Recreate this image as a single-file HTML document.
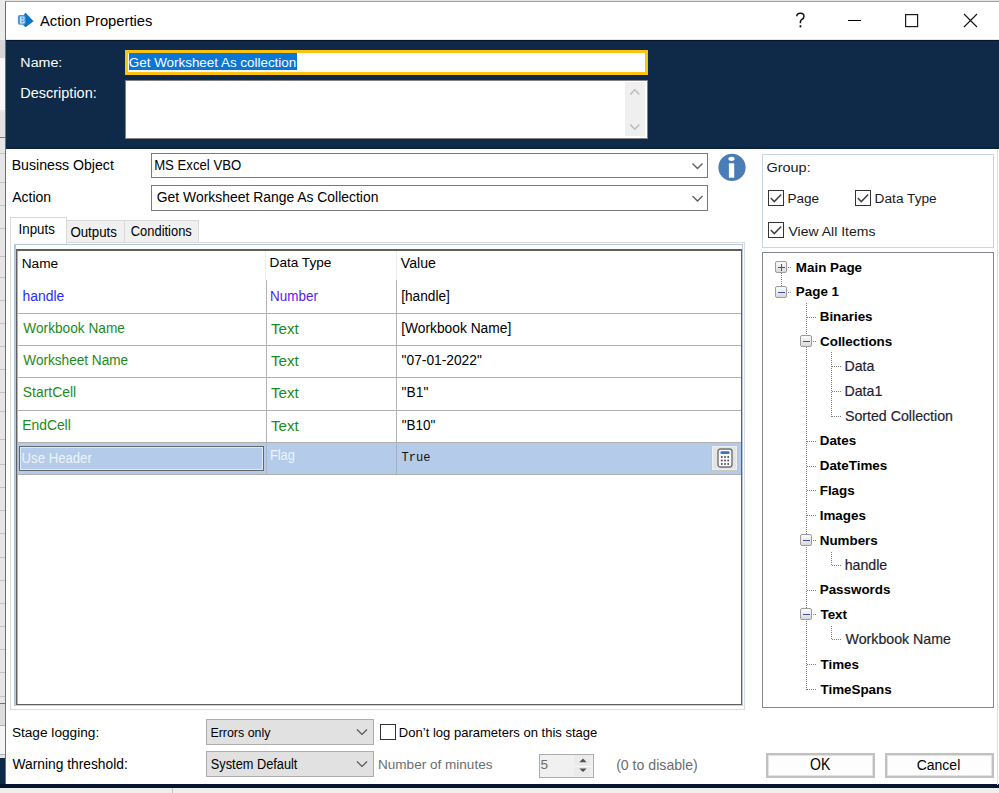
<!DOCTYPE html>
<html><head><meta charset="utf-8">
<style>
*{margin:0;padding:0;box-sizing:border-box}
html,body{width:999px;height:793px;overflow:hidden;background:#f0f0f0}
body{position:relative;font-family:"Liberation Sans",sans-serif;font-size:14px;color:#000}
.a{position:absolute}
.t{position:absolute;white-space:nowrap;line-height:1}
svg{position:absolute;overflow:visible}
</style></head><body>
<div class="a" style="left:0px;top:0px;width:5px;height:793px;background:#e6e6e6"></div>
<div class="a" style="left:0px;top:0px;width:5px;height:40px;background:#ebebeb"></div>
<div class="a" style="left:0px;top:40px;width:5px;height:18px;background:#d6d6d6"></div>
<div class="a" style="left:0px;top:58px;width:5px;height:52px;background:#f7f7f7"></div>
<div class="a" style="left:0px;top:112px;width:5px;height:24px;background:#e2e2e2"></div>
<div class="a" style="left:0px;top:137px;width:5px;height:1px;background:#777"></div>
<div class="a" style="left:0px;top:153px;width:5px;height:1px;background:#c4c4c4"></div>
<div class="a" style="left:0px;top:182px;width:5px;height:1px;background:#c4c4c4"></div>
<div class="a" style="left:0px;top:205px;width:5px;height:1px;background:#c4c4c4"></div>
<div class="a" style="left:0px;top:228px;width:5px;height:1px;background:#c4c4c4"></div>
<div class="a" style="left:0px;top:256px;width:5px;height:1px;background:#c4c4c4"></div>
<div class="a" style="left:0px;top:277px;width:5px;height:1px;background:#c4c4c4"></div>
<div class="a" style="left:0px;top:300px;width:5px;height:1px;background:#c4c4c4"></div>
<div class="a" style="left:0px;top:323px;width:5px;height:1px;background:#c4c4c4"></div>
<div class="a" style="left:0px;top:346px;width:5px;height:1px;background:#c4c4c4"></div>
<div class="a" style="left:0px;top:369px;width:5px;height:1px;background:#c4c4c4"></div>
<div class="a" style="left:0px;top:392px;width:5px;height:1px;background:#c4c4c4"></div>
<div class="a" style="left:0px;top:411px;width:5px;height:1px;background:#c4c4c4"></div>
<div class="a" style="left:0px;top:439px;width:5px;height:1px;background:#c4c4c4"></div>
<div class="a" style="left:0px;top:464px;width:5px;height:1px;background:#c4c4c4"></div>
<div class="a" style="left:0px;top:487px;width:5px;height:1px;background:#c4c4c4"></div>
<div class="a" style="left:0px;top:510px;width:5px;height:1px;background:#c4c4c4"></div>
<div class="a" style="left:0px;top:533px;width:5px;height:1px;background:#c4c4c4"></div>
<div class="a" style="left:0px;top:557px;width:5px;height:1px;background:#c4c4c4"></div>
<div class="a" style="left:0px;top:580px;width:5px;height:1px;background:#c4c4c4"></div>
<div class="a" style="left:0px;top:603px;width:5px;height:1px;background:#c4c4c4"></div>
<div class="a" style="left:0px;top:626px;width:5px;height:1px;background:#c4c4c4"></div>
<div class="a" style="left:0px;top:649px;width:5px;height:1px;background:#c4c4c4"></div>
<div class="a" style="left:0px;top:672px;width:5px;height:1px;background:#c4c4c4"></div>
<div class="a" style="left:0px;top:696px;width:5px;height:1px;background:#c4c4c4"></div>
<div class="a" style="left:0px;top:703px;width:5px;height:1px;background:#707070"></div>
<div class="a" style="left:0px;top:704px;width:5px;height:21px;background:#dedede"></div>
<div class="a" style="left:0px;top:725px;width:5px;height:1px;background:#b0b0b0"></div>
<div class="a" style="left:0px;top:726px;width:5px;height:28px;background:#f4f4f4"></div>
<div class="a" style="left:0px;top:754px;width:5px;height:1px;background:#b0b0b0"></div>
<div class="a" style="left:0px;top:758px;width:5px;height:27px;background:#0e2a48"></div>
<div class="a" style="left:0px;top:784px;width:999px;height:4px;background:#04152d"></div>
<div class="a" style="left:0px;top:788px;width:999px;height:5px;background:#eeeeee"></div>
<div class="a" style="left:172px;top:788px;width:1px;height:5px;background:#c4c4c4"></div>
<div class="a" style="left:5px;top:1px;width:994px;height:783px;background:#fff;border-left:1px solid #707070;border-top:1px solid #a0a0a0"></div>
<div class="a" style="left:5px;top:0px;width:994px;height:1px;background:#e4e4e4"></div>
<svg style="left:0;top:0" width="40" height="40">
<path d="M25.5 12.8 L33.6 21.2 L25.5 27.2 L19 21 Z" fill="#0f70bb"/>
<rect x="17.9" y="14.9" width="7.8" height="9.8" rx="1.8" fill="#4c99d7"/>
<path d="M20 16.4 h3.3 a1.8 1.8 0 0 1 0 3.5 a1.8 1.8 0 0 1 0 3.5 h-3.3 Z M21.4 17.6 v1.6 h1.4 a0.8 0.8 0 0 0 0 -1.6 Z M21.4 20.6 v1.6 h1.5 a0.8 0.8 0 0 0 0 -1.6 Z" fill="#cfe3f3" fill-rule="evenodd"/>
</svg>
<div class="t" style="left:40.00px;top:13.79px;font-size:14.78px;color:#000;">Action Properties</div>
<svg style="left:0;top:0" width="999" height="40">
<path d="M848 20.5 H861" stroke="#000" stroke-width="1"/>
<rect x="905.6" y="14.6" width="12" height="12" fill="none" stroke="#1a1a1a" stroke-width="1.2"/>
<path d="M964 14 L977 27 M977 14 L964 27" stroke="#111" stroke-width="1.1"/>
</svg>
<svg style="left:0;top:0" width="999" height="40">
<path d="M796.8 16.2 Q796.8 13.2 800.4 13.2 Q804 13.2 804 16.3 Q804 18.4 801.6 19.6 Q800.4 20.3 800.4 22 V23.2" fill="none" stroke="#111" stroke-width="1.5"/>
<rect x="799.6" y="25.2" width="1.7" height="2.2" fill="#111"/>
</svg>
<div class="a" style="left:6px;top:40px;width:993px;height:109px;background:#0e2a48"></div>
<div class="a" style="left:6px;top:40px;width:993px;height:1px;background:#04142b"></div>
<div class="a" style="left:6px;top:147px;width:993px;height:2px;background:#0b2440"></div>
<div class="a" style="left:6px;top:39px;width:993px;height:1px;background:#e6e6e6"></div>
<div class="t" style="left:20.36px;top:54.95px;font-size:14.23px;color:#fff;;transform:scale(1,0.95);transform-origin:1.14px 12.05px">Name:</div>
<div class="t" style="left:20.34px;top:85.74px;font-size:14.48px;color:#fff;;transform:scale(1,0.95);transform-origin:1.16px 12.26px">Description:</div>
<div class="a" style="left:125px;top:50px;width:523px;height:25px;background:#fff;border:3px solid #ffc20e"></div>
<div class="a" style="left:128.6px;top:53.3px;width:168px;height:17px;background:#0a76d6"></div>
<div class="t" style="left:128.83px;top:55.64px;font-size:13.41px;color:#fff;">Get Worksheet As collection</div>
<div class="a" style="left:125px;top:80px;width:523px;height:59px;background:#fff;border:1px solid #828282"></div>
<div class="a" style="left:625px;top:82px;width:20px;height:54px;background:#efefef"></div>
<svg style="left:0;top:0" width="999" height="150">
<path d="M630.3 94.5 L634.8 89.8 L639.3 94.5" fill="none" stroke="#bdbdbd" stroke-width="1.6"/>
<path d="M630.3 124.5 L634.8 129.2 L639.3 124.5" fill="none" stroke="#bdbdbd" stroke-width="1.6"/>
</svg>
<div class="t" style="left:11.67px;top:157.73px;font-size:14.15px;color:#000;">Business Object</div>
<div class="t" style="left:12.20px;top:189.95px;font-size:14.00px;color:#000;">Action</div>
<div class="a" style="left:151px;top:153px;width:557px;height:25px;background:#fff;border:1px solid #7a7a7a"></div>
<div class="a" style="left:151px;top:185px;width:557px;height:26px;background:#fff;border:1px solid #7a7a7a"></div>
<div class="t" style="left:154.15px;top:159.04px;font-size:13.18px;color:#000;transform:scaleY(1.1);transform-origin:0 11.15px">MS Excel VBO</div>
<div class="t" style="left:156.80px;top:191.03px;font-size:13.91px;color:#000;">Get Worksheet Range As Collection</div>
<svg style="left:0;top:0" width="999" height="220">
<path d="M692.5 163.5 L697.5 168.5 L702.5 163.5" fill="none" stroke="#606060" stroke-width="1.4"/>
<path d="M692.5 196 L697.5 201 L702.5 196" fill="none" stroke="#606060" stroke-width="1.4"/>
<circle cx="732" cy="167.4" r="13.6" fill="#4a7db7"/>
<ellipse cx="731.5" cy="158.8" rx="3.1" ry="2.1" fill="#fff"/>
<rect x="728.9" y="163.3" width="5.3" height="14.4" fill="#fff"/>
</svg>
<div class="a" style="left:762px;top:154px;width:232px;height:94px;border:1px solid #c7d5e5"></div>
<div class="t" style="left:766.38px;top:160.03px;font-size:14.50px;color:#1a1a1a;;transform:scale(1,0.92);transform-origin:0.72px 12.27px">Group:</div>
<div class="a" style="left:768px;top:190px;width:16px;height:16px;border:1px solid #333;background:#fff"></div>
<svg style="left:768px;top:190px" width="16" height="16"><path d="M2.8 8 L6.3 11.6 L13.2 4.4" fill="none" stroke="#404040" stroke-width="1.45"/></svg>
<div class="a" style="left:855px;top:190px;width:16px;height:16px;border:1px solid #333;background:#fff"></div>
<svg style="left:855px;top:190px" width="16" height="16"><path d="M2.8 8 L6.3 11.6 L13.2 4.4" fill="none" stroke="#404040" stroke-width="1.45"/></svg>
<div class="a" style="left:768px;top:222px;width:16px;height:16px;border:1px solid #333;background:#fff"></div>
<svg style="left:768px;top:222px" width="16" height="16"><path d="M2.8 8 L6.3 11.6 L13.2 4.4" fill="none" stroke="#404040" stroke-width="1.45"/></svg>
<div class="t" style="left:787.42px;top:191.82px;font-size:13.56px;color:#1a1a1a;">Page</div>
<div class="t" style="left:874.60px;top:191.71px;font-size:13.70px;color:#1a1a1a;">Data Type</div>
<div class="t" style="left:788.46px;top:223.63px;font-size:14.02px;color:#1a1a1a;;transform:scale(1,0.94);transform-origin:0.04px 11.87px">View All Items</div>
<div class="a" style="left:762px;top:252px;width:232px;height:456px;border:1px solid #828790;background:#fff"></div>
<div class="a" style="left:781px;top:267px;width:1px;height:25px;background:repeating-linear-gradient(180deg,#7c7c7c 0 1px,transparent 1px 2px)"></div>
<div class="a" style="left:806px;top:303px;width:1px;height:387px;background:repeating-linear-gradient(180deg,#7c7c7c 0 1px,transparent 1px 2px)"></div>
<div class="a" style="left:831px;top:352px;width:1px;height:65px;background:repeating-linear-gradient(180deg,#7c7c7c 0 1px,transparent 1px 2px)"></div>
<div class="a" style="left:831px;top:552px;width:1px;height:14px;background:repeating-linear-gradient(180deg,#7c7c7c 0 1px,transparent 1px 2px)"></div>
<div class="a" style="left:831px;top:626px;width:1px;height:14px;background:repeating-linear-gradient(180deg,#7c7c7c 0 1px,transparent 1px 2px)"></div>
<div class="a" style="left:782px;top:267px;width:10px;height:1px;background:repeating-linear-gradient(90deg,#7c7c7c 0 1px,transparent 1px 2px)"></div>
<div class="t" style="left:795.83px;top:260.66px;font-size:13.40px;font-weight:bold;color:#000;">Main Page</div>
<div class="a" style="left:782px;top:292px;width:10px;height:1px;background:repeating-linear-gradient(90deg,#7c7c7c 0 1px,transparent 1px 2px)"></div>
<div class="t" style="left:795.83px;top:285.48px;font-size:13.40px;font-weight:bold;color:#000;">Page 1</div>
<div class="a" style="left:807px;top:317px;width:10px;height:1px;background:repeating-linear-gradient(90deg,#7c7c7c 0 1px,transparent 1px 2px)"></div>
<div class="t" style="left:819.73px;top:310.30px;font-size:13.40px;font-weight:bold;color:#000;">Binaries</div>
<div class="a" style="left:807px;top:341px;width:10px;height:1px;background:repeating-linear-gradient(90deg,#7c7c7c 0 1px,transparent 1px 2px)"></div>
<div class="t" style="left:820.06px;top:335.12px;font-size:13.40px;font-weight:bold;color:#000;">Collections</div>
<div class="a" style="left:832px;top:366px;width:10px;height:1px;background:repeating-linear-gradient(90deg,#7c7c7c 0 1px,transparent 1px 2px)"></div>
<div class="t" style="left:844.46px;top:359.26px;font-size:14.20px;color:#1e1e30;-webkit-text-stroke:0.18px #1e1e30">Data</div>
<div class="a" style="left:832px;top:391px;width:10px;height:1px;background:repeating-linear-gradient(90deg,#7c7c7c 0 1px,transparent 1px 2px)"></div>
<div class="t" style="left:844.46px;top:384.08px;font-size:14.20px;color:#1e1e30;-webkit-text-stroke:0.18px #1e1e30">Data1</div>
<div class="a" style="left:832px;top:416px;width:10px;height:1px;background:repeating-linear-gradient(90deg,#7c7c7c 0 1px,transparent 1px 2px)"></div>
<div class="t" style="left:844.96px;top:408.90px;font-size:14.20px;color:#1e1e30;-webkit-text-stroke:0.18px #1e1e30">Sorted Collection</div>
<div class="a" style="left:807px;top:441px;width:10px;height:1px;background:repeating-linear-gradient(90deg,#7c7c7c 0 1px,transparent 1px 2px)"></div>
<div class="t" style="left:819.73px;top:434.40px;font-size:13.40px;font-weight:bold;color:#000;">Dates</div>
<div class="a" style="left:807px;top:466px;width:10px;height:1px;background:repeating-linear-gradient(90deg,#7c7c7c 0 1px,transparent 1px 2px)"></div>
<div class="t" style="left:819.73px;top:459.22px;font-size:13.40px;font-weight:bold;color:#000;">DateTimes</div>
<div class="a" style="left:807px;top:490px;width:10px;height:1px;background:repeating-linear-gradient(90deg,#7c7c7c 0 1px,transparent 1px 2px)"></div>
<div class="t" style="left:819.73px;top:484.04px;font-size:13.40px;font-weight:bold;color:#000;">Flags</div>
<div class="a" style="left:807px;top:515px;width:10px;height:1px;background:repeating-linear-gradient(90deg,#7c7c7c 0 1px,transparent 1px 2px)"></div>
<div class="t" style="left:819.73px;top:508.86px;font-size:13.40px;font-weight:bold;color:#000;">Images</div>
<div class="a" style="left:807px;top:540px;width:10px;height:1px;background:repeating-linear-gradient(90deg,#7c7c7c 0 1px,transparent 1px 2px)"></div>
<div class="t" style="left:819.73px;top:533.68px;font-size:13.40px;font-weight:bold;color:#000;">Numbers</div>
<div class="a" style="left:832px;top:565px;width:10px;height:1px;background:repeating-linear-gradient(90deg,#7c7c7c 0 1px,transparent 1px 2px)"></div>
<div class="t" style="left:844.64px;top:557.82px;font-size:14.20px;color:#1e1e30;-webkit-text-stroke:0.18px #1e1e30">handle</div>
<div class="a" style="left:807px;top:590px;width:10px;height:1px;background:repeating-linear-gradient(90deg,#7c7c7c 0 1px,transparent 1px 2px)"></div>
<div class="t" style="left:819.73px;top:583.32px;font-size:13.40px;font-weight:bold;color:#000;">Passwords</div>
<div class="a" style="left:807px;top:614px;width:10px;height:1px;background:repeating-linear-gradient(90deg,#7c7c7c 0 1px,transparent 1px 2px)"></div>
<div class="t" style="left:820.47px;top:608.14px;font-size:13.40px;font-weight:bold;color:#000;">Text</div>
<div class="a" style="left:832px;top:639px;width:10px;height:1px;background:repeating-linear-gradient(90deg,#7c7c7c 0 1px,transparent 1px 2px)"></div>
<div class="t" style="left:845.56px;top:632.28px;font-size:14.20px;color:#1e1e30;-webkit-text-stroke:0.18px #1e1e30">Workbook Name</div>
<div class="a" style="left:807px;top:664px;width:10px;height:1px;background:repeating-linear-gradient(90deg,#7c7c7c 0 1px,transparent 1px 2px)"></div>
<div class="t" style="left:820.47px;top:657.78px;font-size:13.40px;font-weight:bold;color:#000;">Times</div>
<div class="a" style="left:807px;top:689px;width:10px;height:1px;background:repeating-linear-gradient(90deg,#7c7c7c 0 1px,transparent 1px 2px)"></div>
<div class="t" style="left:820.47px;top:682.60px;font-size:13.40px;font-weight:bold;color:#000;">TimeSpans</div>
<div class="a" style="left:775px;top:261px;width:12px;height:12px;border:1px solid #9c9c9c;border-radius:2px;background:linear-gradient(#fbfbfb,#d9d9d9)"></div>
<div class="a" style="left:778px;top:267px;width:7px;height:1px;background:#4050a0"></div>
<div class="a" style="left:781px;top:264px;width:1px;height:7px;background:#4050a0"></div>
<div class="a" style="left:775px;top:286px;width:12px;height:12px;border:1px solid #9c9c9c;border-radius:2px;background:linear-gradient(#fbfbfb,#d9d9d9)"></div>
<div class="a" style="left:778px;top:292px;width:7px;height:1px;background:#4050a0"></div>
<div class="a" style="left:800px;top:335px;width:12px;height:12px;border:1px solid #9c9c9c;border-radius:2px;background:linear-gradient(#fbfbfb,#d9d9d9)"></div>
<div class="a" style="left:803px;top:341px;width:7px;height:1px;background:#4050a0"></div>
<div class="a" style="left:800px;top:534px;width:12px;height:12px;border:1px solid #9c9c9c;border-radius:2px;background:linear-gradient(#fbfbfb,#d9d9d9)"></div>
<div class="a" style="left:803px;top:540px;width:7px;height:1px;background:#4050a0"></div>
<div class="a" style="left:800px;top:608px;width:12px;height:12px;border:1px solid #9c9c9c;border-radius:2px;background:linear-gradient(#fbfbfb,#d9d9d9)"></div>
<div class="a" style="left:803px;top:614px;width:7px;height:1px;background:#4050a0"></div>
<div class="a" style="left:10px;top:242px;width:735px;height:468px;border:1px solid #dadada;background:#fff"></div>
<div class="a" style="left:66px;top:220px;width:59px;height:23px;border:1px solid #d9d9d9;background:#f0f0f0"></div>
<div class="a" style="left:124px;top:220px;width:75px;height:23px;border:1px solid #d9d9d9;background:#f0f0f0"></div>
<div class="a" style="left:10px;top:217px;width:57px;height:27px;border:1px solid #d9d9d9;border-bottom:none;background:#fff"></div>
<div class="t" style="left:18.60px;top:223.34px;font-size:13.31px;color:#000;;transform:scale(1,1.13);transform-origin:1.20px 11.26px">Inputs</div>
<div class="t" style="left:70.40px;top:226.05px;font-size:13.29px;color:#000;;transform:scale(1,1.1);transform-origin:0.60px 11.25px">Outputs</div>
<div class="t" style="left:130.75px;top:226.35px;font-size:12.93px;color:#000;;transform:scale(1,1.1);transform-origin:0.65px 10.95px">Conditions</div>
<div class="a" style="left:14px;top:244px;width:729px;height:462px;border:1px solid #b4c8e2;border-left-width:2px;border-top-width:1.5px;border-bottom-color:#c4d4ea"></div>
<div class="a" style="left:16px;top:249px;width:726px;height:456px;border:1px solid #5f5f5f;border-top-width:2px;box-shadow:inset 1px 0 0 #b4b4b4;background:#fff"></div>
<div class="a" style="left:265px;top:251px;width:1px;height:29px;background:#ececec"></div>
<div class="a" style="left:396px;top:251px;width:1px;height:29px;background:#ececec"></div>
<div class="t" style="left:21.71px;top:256.73px;font-size:13.67px;color:#000;">Name</div>
<div class="t" style="left:269.61px;top:256.49px;font-size:13.60px;color:#000;">Data Type</div>
<div class="t" style="left:400.86px;top:255.85px;font-size:14.11px;color:#000;">Value</div>
<div class="a" style="left:266px;top:280px;width:1px;height:195px;background:#b4b4b4"></div>
<div class="a" style="left:396px;top:280px;width:1px;height:195px;background:#b4b4b4"></div>
<div class="t" style="left:22.46px;top:289.61px;font-size:13.93px;color:#2a2aff;;transform:scale(1,1.08);transform-origin:0.94px 11.79px">handle</div>
<div class="t" style="left:270.12px;top:290.00px;font-size:13.47px;color:#5522ee;;transform:scale(1,1.08);transform-origin:1.08px 11.40px">Number</div>
<div class="t" style="left:401.24px;top:289.83px;font-size:13.66px;color:#000;;transform:scale(1,1.08);transform-origin:0.96px 11.57px">[handle]</div>
<div class="t" style="left:23.37px;top:321.82px;font-size:13.68px;color:#1c8a1c;;transform:scale(1,1.08);transform-origin:0.03px 11.58px">Workbook Name</div>
<div class="t" style="left:270.92px;top:321.55px;font-size:14.00px;color:#1c8a1c;;transform:scale(1.085,1.05);transform-origin:0.28px 11.85px">Text</div>
<div class="t" style="left:401.23px;top:321.72px;font-size:13.79px;color:#000;;transform:scale(1,1.08);transform-origin:0.97px 11.68px">[Workbook Name]</div>
<div class="t" style="left:23.37px;top:353.88px;font-size:13.60px;color:#1c8a1c;;transform:scale(1,1.08);transform-origin:0.03px 11.52px">Worksheet Name</div>
<div class="t" style="left:270.92px;top:353.55px;font-size:14.00px;color:#1c8a1c;;transform:scale(1.085,1.05);transform-origin:0.28px 11.85px">Text</div>
<div class="t" style="left:401.61px;top:353.73px;font-size:13.78px;color:#000;;transform:scale(1,1.08);transform-origin:0.59px 11.67px">"07-01-2022"</div>
<div class="t" style="left:22.77px;top:385.63px;font-size:13.91px;color:#1c8a1c;;transform:scale(1,1.08);transform-origin:0.63px 11.77px">StartCell</div>
<div class="t" style="left:270.92px;top:385.55px;font-size:14.00px;color:#1c8a1c;;transform:scale(1.085,1.05);transform-origin:0.28px 11.85px">Text</div>
<div class="t" style="left:401.61px;top:385.72px;font-size:13.80px;color:#000;;transform:scale(1,1.08);transform-origin:0.59px 11.68px">"B1"</div>
<div class="t" style="left:22.29px;top:418.68px;font-size:13.85px;color:#1c8a1c;;transform:scale(1,1.08);transform-origin:1.11px 11.72px">EndCell</div>
<div class="t" style="left:270.92px;top:418.55px;font-size:14.00px;color:#1c8a1c;;transform:scale(1.085,1.05);transform-origin:0.28px 11.85px">Text</div>
<div class="t" style="left:401.63px;top:418.96px;font-size:13.51px;color:#000;;transform:scale(1,1.08);transform-origin:0.57px 11.44px">"B10"</div>
<div class="a" style="left:18px;top:313px;width:723px;height:1px;background:#b0b0b0"></div>
<div class="a" style="left:18px;top:345px;width:723px;height:1px;background:#b0b0b0"></div>
<div class="a" style="left:18px;top:377px;width:723px;height:1px;background:#b0b0b0"></div>
<div class="a" style="left:18px;top:410px;width:723px;height:1px;background:#b0b0b0"></div>
<div class="a" style="left:18px;top:442px;width:723px;height:1px;background:#b0b0b0"></div>
<div class="a" style="left:18px;top:443px;width:723px;height:31px;background:#b5cbea"></div>
<div class="a" style="left:18px;top:474px;width:723px;height:1px;background:#b0b0b0"></div>
<div class="a" style="left:396px;top:443px;width:1px;height:31px;background:#a3b3c8"></div>
<div class="a" style="left:266px;top:443px;width:1px;height:31px;background:#a9b6c8"></div>
<div class="a" style="left:19px;top:446px;width:245px;height:25px;border:1px solid #60656c;box-shadow:inset 0 0 0 1px #dfe8f5"></div>
<div class="t" style="left:21.61px;top:452.06px;font-size:13.16px;color:#eef3fb;;transform:scale(1,1.14);transform-origin:0.99px 11.14px">Use Header</div>
<div class="t" style="left:269.98px;top:449.90px;font-size:12.76px;color:#eef3fb;;transform:scale(1,1.1);transform-origin:1.02px 10.80px">Flag</div>
<div class="t" style="left:401.58px;top:452.00px;font-size:12.00px;font-family:'Liberation Mono',monospace;color:#111;">True</div>
<div class="a" style="left:711px;top:445px;width:27px;height:26px;background:#e4e4e4;border:1px solid #c4c4c4;box-shadow:inset 0 0 0 1px #f0f0f0"></div>
<svg style="left:717px;top:448px" width="16" height="20" viewBox="0 0 16 20">
 <rect x="1" y="1" width="14" height="18" rx="2.6" fill="#fafafa" stroke="#707070" stroke-width="1.4"/>
 <rect x="3.4" y="3.2" width="9.2" height="2.8" rx="1.2" fill="#3f74b8"/>
 <g fill="#505050"><circle cx="4.8" cy="9" r="1"/><circle cx="8" cy="9" r="1"/><circle cx="11.2" cy="9" r="1"/>
 <circle cx="4.8" cy="12.6" r="1"/><circle cx="8" cy="12.6" r="1"/><circle cx="11.2" cy="12.6" r="1"/>
 <circle cx="4.8" cy="16" r="1"/><circle cx="8" cy="16" r="1"/><circle cx="11.2" cy="16" r="1"/></g>
</svg>
<div class="t" style="left:11.89px;top:725.94px;font-size:13.66px;color:#000;">Stage logging:</div>
<div class="t" style="left:12.47px;top:758.32px;font-size:13.80px;color:#000;">Warning threshold:</div>
<div class="a" style="left:206px;top:719px;width:168px;height:26px;background:#e1e1e1;border:1px solid #adadad"></div>
<div class="a" style="left:206px;top:751px;width:168px;height:26px;background:#e1e1e1;border:1px solid #adadad"></div>
<div class="t" style="left:210.41px;top:726.70px;font-size:12.41px;color:#000;transform:scaleY(1.1);transform-origin:0 10.5px">Errors only</div>
<div class="t" style="left:210.82px;top:758.98px;font-size:12.78px;color:#000;transform:scaleY(1.08);transform-origin:0 10.8px">System Default</div>
<svg style="left:0;top:0" width="999" height="793">
<path d="M357 729.5 L362 734.5 L367 729.5" fill="none" stroke="#555" stroke-width="1.2"/>
<path d="M357 761.5 L362 766.5 L367 761.5" fill="none" stroke="#555" stroke-width="1.2"/>
</svg>
<div class="a" style="left:380px;top:724px;width:16px;height:16px;border:1px solid #333;background:#fff"></div>
<div class="t" style="left:398.86px;top:725.76px;font-size:13.04px;color:#000;">Don’t log parameters on this stage</div>
<div class="t" style="left:378.02px;top:758.32px;font-size:13.56px;color:#6d6d6d;">Number of minutes</div>
<div class="a" style="left:539px;top:753.5px;width:55px;height:24.5px;background:#f0f0f0;border:1px solid #adadad"></div>
<div class="t" style="left:540.46px;top:758.29px;font-size:13.60px;color:#6d6d6d;">5</div>
<div class="a" style="left:574px;top:755px;width:17px;height:21px;background:#eaeaea"></div>
<div class="a" style="left:574px;top:765.5px;width:17px;height:1px;background:#f8f8f8"></div>
<svg style="left:0;top:0" width="999" height="793">
<path d="M579.3 762.3 L583 758.6 L586.7 762.3 Z" fill="#505050"/>
<path d="M579.3 768.4 L586.7 768.4 L583 772.1 Z" fill="#505050"/>
</svg>
<div class="t" style="left:616.15px;top:757.84px;font-size:14.13px;color:#6d6d6d;">(0 to disable)</div>
<div class="a" style="left:766px;top:753px;width:109px;height:25px;background:#fdfdfd;border:2px solid #c0c0c0;box-shadow:inset 0 0 0 1px #e2e2e2"></div>
<div class="a" style="left:885px;top:753px;width:109px;height:25px;background:#fdfdfd;border:2px solid #c0c0c0;box-shadow:inset 0 0 0 1px #e2e2e2"></div>
<div class="t" style="left:810.07px;top:758.12px;font-size:14.03px;color:#000;;transform:scale(1,1.12);transform-origin:0.63px 11.88px">OK</div>
<div class="t" style="left:916.70px;top:758.14px;font-size:14.01px;color:#000;;transform:scale(1,1.1);transform-origin:0.70px 11.86px">Cancel</div>
<div class="a" style="left:997px;top:149px;width:1px;height:636px;background:#dedede"></div>
</body></html>
